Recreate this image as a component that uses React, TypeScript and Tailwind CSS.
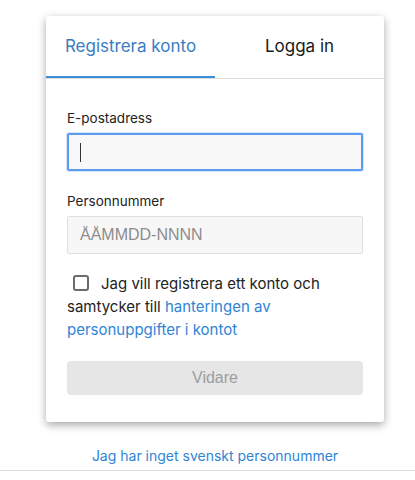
import { useState } from 'react'

const sans = "font-['Inter',_'Liberation_Sans',_sans-serif]"
const arial = "font-['Liberation_Sans',_Arial,_sans-serif]"

function Tabs({ active, onChange }: { active: 'register' | 'login'; onChange: (t: 'register' | 'login') => void }) {
  return (
    <div className="flex border-b border-[#dcdcdc]">
      <button
        type="button"
        onClick={() => onChange('register')}
        className={`flex h-[62px] flex-1 items-center justify-center border-b-2 pt-[2px] text-[17px] ${
          active === 'register' ? 'border-[#3b8fd9] text-[#3a7dbf]' : 'border-transparent text-[#1a1a1a]'
        }`}
      >
        Registrera konto
      </button>
      <button
        type="button"
        onClick={() => onChange('login')}
        className={`flex h-[62px] flex-1 items-center justify-center border-b-2 pt-[2px] text-[17px] ${
          active === 'login' ? 'border-[#3b8fd9] text-[#3a7dbf]' : 'border-transparent text-[#1a1a1a]'
        }`}
      >
        Logga in
      </button>
    </div>
  )
}

export default function App() {
  const [tab, setTab] = useState<'register' | 'login'>('register')
  const [agreed, setAgreed] = useState(false)

  return (
    <div className={`min-h-[480px] bg-white ${sans}`}>
      <div className="ml-[46px] w-[338px] pt-[16px]">
        <div className="rounded-[3px] bg-white shadow-[0_3px_8px_rgba(0,0,0,0.35)]">
          <Tabs active={tab} onChange={setTab} />

          <div className="px-[21px] pb-[27px] pt-[29px]">
            <label className="mb-[5px] block text-[13.5px] leading-[20px] text-[#222]">E-postadress</label>
            <div className="flex h-[38px] items-center rounded-[2px] border-2 border-[#5b9cf0] bg-[#f8f8f8] pl-[11px] shadow-[0_0_0_1px_rgba(91,156,240,0.25)]">
              <span className="h-[19px] w-px bg-[#333]" />
            </div>

            <label className="mb-[5px] mt-[20px] block text-[13.5px] leading-[20px] text-[#222]">Personnummer</label>
            <input
              placeholder="ÅÅMMDD-NNNN"
              className={`block h-[38px] w-full rounded-[2px] border border-[#e0e0e0] bg-[#f7f7f7] pl-[12px] text-[16px] text-[#333] outline-none placeholder:text-[#8c8c8c] ${arial}`}
            />

            <p className="mt-[18px] text-[15px] leading-[23px] text-[#222]">
              <span
                onClick={() => setAgreed(!agreed)}
                className="mb-[-2px] ml-[6px] mr-[12px] inline-block h-[16px] w-[16px] cursor-pointer rounded-[3px] border-2 border-[#6b6b6b] bg-white"
              />
              Jag vill registrera ett konto och samtycker till{' '}
              <a href="#" className="text-[#2f84d6]">
                hanteringen av personuppgifter i kontot
              </a>
            </p>

            <button
              type="button"
              disabled
              className={`mt-[20px] block h-[34px] w-full rounded-[4px] bg-[#e6e6e6] text-[16px] text-[#9d9d9d] ${arial}`}
            >
              Vidare
            </button>
          </div>
        </div>

        <div className="mt-[23px] text-center leading-[20px]">
          <a href="#" className="text-[14px] text-[#2f84d6]">
            Jag har inget svenskt personnummer
          </a>
        </div>
      </div>
      <div className="mt-[4px] h-px w-full bg-[#dedede]" />
    </div>
  )
}
